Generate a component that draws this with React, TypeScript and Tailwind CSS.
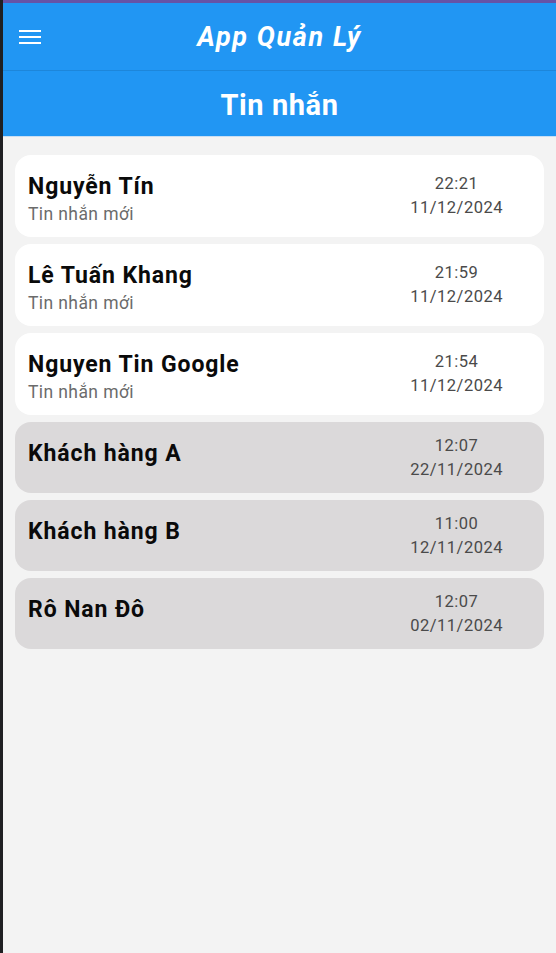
type Chat = {
  name: string;
  time: string;
  date: string;
  unread: boolean;
};

const chats: Chat[] = [
  { name: "Nguyễn Tín", time: "22:21", date: "11/12/2024", unread: true },
  { name: "Lê Tuấn Khang", time: "21:59", date: "11/12/2024", unread: true },
  { name: "Nguyen Tin Google", time: "21:54", date: "11/12/2024", unread: true },
  { name: "Khách hàng A", time: "12:07", date: "22/11/2024", unread: false },
  { name: "Khách hàng B", time: "11:00", date: "12/11/2024", unread: false },
  { name: "Rô Nan Đô", time: "12:07", date: "02/11/2024", unread: false },
];

const MenuIcon = () => (
  <svg width="22" height="14" viewBox="0 0 22 14" fill="white">
    <rect x="0" y="0" width="22" height="2" />
    <rect x="0" y="6" width="22" height="2" />
    <rect x="0" y="12" width="22" height="2" />
  </svg>
);

const ChatCard = ({ chat }: { chat: Chat }) => (
  <div
    className={
      chat.unread
        ? "h-[82px] bg-white rounded-2xl px-[13px] flex justify-between"
        : "h-[71px] bg-[#dbd9da] rounded-2xl px-[13px] flex justify-between"
    }
  >
    <div className="pt-[18px]">
      <p className="text-[23px] font-bold leading-7 tracking-[0.9px] text-[#0a0a0a]">{chat.name}</p>
      {chat.unread && (
        <p className="mt-0.5 text-[17.5px] leading-[22px] tracking-[0.4px] text-[#6b6b6b]">Tin nhắn mới</p>
      )}
    </div>
    <div className="self-center pr-7 text-center text-[16.5px] leading-6 tracking-[0.5px] text-[#4a4a4a]">
      <p>{chat.time}</p>
      <p>{chat.date}</p>
    </div>
  </div>
);

const App = () => {
  return (
    <div
      className="flex h-[953px] w-[556px] bg-[#1f1f22] pl-[3px]"
      style={{ fontFamily: "Roboto, 'Noto Sans', sans-serif" }}
    >
      <div className="flex-1 flex flex-col bg-[#f3f3f3]">
        <div className="h-[3px] bg-[#6653a6]" />
        <header className="h-[67px] bg-[#2196f3] flex items-center px-4">
          <MenuIcon />
          <h1 className="flex-1 pt-0.5 text-center text-[27px] font-bold italic tracking-[1.6px] text-white">App Quản Lý</h1>
          <div className="w-[22px]" />
        </header>
        <div className="h-px bg-[#1d86da]" />
        <div className="h-[66px] bg-[#2196f3] flex items-center justify-center pt-1 border-b border-[#c9def3]">
          <h2 className="text-[29px] font-bold tracking-[0.6px] text-white">Tin nhắn</h2>
        </div>
        <div className="px-3 pt-[18px] flex flex-col gap-[7px]">
          {chats.map((c) => (
            <ChatCard key={c.name} chat={c} />
          ))}
        </div>
      </div>
    </div>
  );
};

export default App;
